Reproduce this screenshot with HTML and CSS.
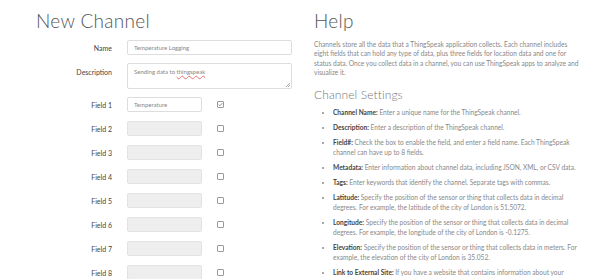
FILE: index.html
```html
<!DOCTYPE html>
<html>
<head>
    <title>New Channel</title>
    <link rel="stylesheet" href="styles.css">
</head>
<body>
    <div class="page">
        <div class="form-col">
            <h1>New Channel</h1>
            <div class="row">
                <label>Name</label>
                <input class="wide" type="text" value="Temperature Logging">
            </div>
            <div class="row">
                <label>Description</label>
                <div class="textarea">Sending data to <span class="typo">thingspeak</span></div>
            </div>
            <div class="row field">
                <label>Field 1</label>
                <input type="text" value="Temperature">
                <span class="check checked">
                    <svg width="5" height="5" viewBox="0 0 10 10"><path d="M1.5 5.2 L4 7.6 L8.6 2.2" fill="none" stroke="#777" stroke-width="1.6"/></svg>
                </span>
            </div>
            <div class="row field">
                <label>Field 2</label>
                <input type="text" disabled>
                <span class="check"></span>
            </div>
            <div class="row field">
                <label>Field 3</label>
                <input type="text" disabled>
                <span class="check"></span>
            </div>
            <div class="row field">
                <label>Field 4</label>
                <input type="text" disabled>
                <span class="check"></span>
            </div>
            <div class="row field">
                <label>Field 5</label>
                <input type="text" disabled>
                <span class="check"></span>
            </div>
            <div class="row field">
                <label>Field 6</label>
                <input type="text" disabled>
                <span class="check"></span>
            </div>
            <div class="row field">
                <label>Field 7</label>
                <input type="text" disabled>
                <span class="check"></span>
            </div>
            <div class="row field">
                <label>Field 8</label>
                <input type="text" disabled>
                <span class="check"></span>
            </div>
        </div>

        <div class="help-col">
            <h1>Help</h1>
            <p>Channels store all the data that a ThingSpeak application collects. Each channel includes eight fields that can hold any type of data, plus three fields for location data and one for status data. Once you collect data in a channel, you can use ThingSpeak apps to analyze and visualize it.</p>
            <h2>Channel Settings</h2>
            <ul>
                <li><b>Channel Name:</b> Enter a unique name for the ThingSpeak channel.</li>
                <li><b>Description:</b> Enter a description of the ThingSpeak channel.</li>
                <li><b>Field#:</b> Check the box to enable the field, and enter a field name. Each ThingSpeak channel can have up to 8 fields.</li>
                <li><b>Metadata:</b> Enter information about channel data, including JSON, XML, or CSV data.</li>
                <li><b>Tags:</b> Enter keywords that identify the channel. Separate tags with commas.</li>
                <li><b>Latitude:</b> Specify the position of the sensor or thing that collects data in decimal degrees. For example, the latitude of the city of London is 51.5072.</li>
                <li><b>Longitude:</b> Specify the position of the sensor or thing that collects data in decimal degrees. For example, the longitude of the city of London is -0.1275.</li>
                <li><b>Elevation:</b> Specify the position of the sensor or thing that collects data in meters. For example, the elevation of the city of London is 35.052.</li>
                <li><b>Link to External Site:</b> If you have a website that contains information about your ThingSpeak channel, specify the URL.</li>
            </ul>
        </div>
    </div>
</body>
</html>
```

FILE: styles.css
```css
body {
    margin: 0;
    background-color: #fff;
    font-family: Lato, "Open Sans", sans-serif;
    color: #555;
}
.page {
    display: flex;
    padding-top: 9px;
}
.form-col {
    width: 278px;
    padding-left: 36px;
}
.help-col {
    width: 268px;
}
h1 {
    margin: 0 0 7px 0;
    font-size: 19px;
    line-height: 24px;
    font-weight: 300;
    color: #555;
    letter-spacing: 0.3px;
}
h2 {
    margin: 0 0 4px 0;
    font-size: 12px;
    line-height: 16px;
    font-weight: 300;
    color: #777;
    letter-spacing: 0.1px;
}
.row {
    display: flex;
    align-items: center;
    margin-bottom: 8px;
}
.row label {
    width: 76px;
    margin-right: 15px;
    text-align: right;
    font-size: 7px;
    color: #444;
}
.row:nth-child(3) {
    align-items: flex-start;
}
.row:nth-child(3) label {
    padding-top: 5px;
}
.field {
    margin-bottom: 9px;
}
input {
    box-sizing: border-box;
    width: 75px;
    height: 15px;
    margin: 0;
    padding: 0 6px;
    border: 1px solid #ddd;
    border-radius: 2px;
    background-color: #fff;
    font-family: Lato, "Open Sans", sans-serif;
    font-size: 6px;
    color: #888;
}
input.wide {
    width: 165px;
}
input:disabled {
    background-color: #eee;
    border-color: #e2e2e2;
}
.textarea {
    box-sizing: border-box;
    width: 165px;
    height: 26px;
    padding: 4px 6px;
    border: 1px solid #ddd;
    border-radius: 2px;
    font-size: 6px;
    color: #888;
    position: relative;
}
.textarea::after {
    content: "";
    position: absolute;
    right: 1px;
    bottom: 1px;
    width: 4px;
    height: 4px;
    background: linear-gradient(135deg, transparent 45%, #aaa 45%, #aaa 55%, transparent 55%, transparent 75%, #aaa 75%, #aaa 85%, transparent 85%);
}
.typo {
    text-decoration: underline wavy #e57373;
    text-decoration-thickness: 0.5px;
}
.check {
    box-sizing: border-box;
    width: 7px;
    height: 7px;
    margin-left: 15px;
    border: 1px solid #999;
    border-radius: 1px;
    display: flex;
    align-items: center;
    justify-content: center;
}
p {
    margin: 0 0 10px 0;
    font-size: 6.6px;
    line-height: 9.3px;
    color: #888;
}
ul {
    margin: 0;
    padding-left: 19px;
    font-size: 6.6px;
    line-height: 10px;
    color: #888;
}
li {
    margin-bottom: 5px;
}
li b {
    color: #444;
    font-weight: 700;
}
```
